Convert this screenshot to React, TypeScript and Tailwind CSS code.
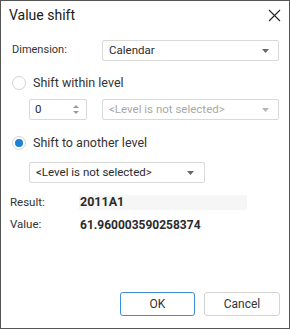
import React from "react";

const font = { fontFamily: "Roboto, 'Liberation Sans', sans-serif" };

const Caret = ({ color = "#666" }: { color?: string }) => (
  <svg width="7" height="4" viewBox="0 0 7 4">
    <path d="M0 0h7L3.5 4z" fill={color} />
  </svg>
);

const Combo = ({
  text,
  disabled,
  className,
}: {
  text: string;
  disabled?: boolean;
  className: string;
}) => (
  <div
    className={`flex items-center justify-between h-[21px] rounded-[2px] border border-[#d9d9d9] bg-white pl-[6px] pr-[9px] ${className}`}
  >
    <span className={disabled ? "text-[#a9a9a9]" : "text-[#2b2b2b]"}>{text}</span>
    <Caret color={disabled ? "#b5b5b5" : "#666"} />
  </div>
);

const Radio = ({ checked, label }: { checked?: boolean; label: string }) => (
  <div className="flex items-center gap-[7px] pl-[11px] h-[18px]">
    <div className="w-[14px] h-[14px] rounded-full border border-[#d4d4d4] flex items-center justify-center">
      {checked && <div className="w-[8px] h-[8px] rounded-full bg-[#1e80d2]" />}
    </div>
    <span className="text-[12.5px] text-[#333]">{label}</span>
  </div>
);

export default function App() {
  return (
    <div
      style={font}
      className="w-[290px] h-[329px] bg-white border border-[#555] flex flex-col text-[11.5px] text-[#333]"
    >
      <div className="flex items-center justify-between h-[28px] pl-[8px] pr-[8px]">
        <span className="text-[14px] text-[#1a1a1a]">Value shift</span>
        <svg width="13" height="13" viewBox="0 0 13 13">
          <path d="M1 1l11 11M12 1L1 12" stroke="#222" strokeWidth="1.1" />
        </svg>
      </div>

      <div className="flex items-center mt-[11px] h-[21px]">
        <span className="pl-[11px] w-[101px] text-[11px]">Dimension:</span>
        <Combo text="Calendar" className="w-[177px]" />
      </div>

      <div className="mt-[13px]">
        <Radio label="Shift within level" />
      </div>

      <div className="flex items-center mt-[7px] pl-[28px] gap-[15px]">
        <div className="flex items-center justify-between w-[58px] h-[21px] rounded-[2px] border border-[#d9d9d9] pl-[5px] pr-[7px]">
          <span className="text-[#2b2b2b]">0</span>
          <div className="flex flex-col gap-[3px]">
            <svg width="6" height="3" viewBox="0 0 6 3">
              <path d="M0 3h6L3 0z" fill="#9a9a9a" />
            </svg>
            <svg width="6" height="3" viewBox="0 0 6 3">
              <path d="M0 0h6L3 3z" fill="#9a9a9a" />
            </svg>
          </div>
        </div>
        <Combo text="<Level is not selected>" disabled className="w-[177px]" />
      </div>

      <div className="mt-[14px]">
        <Radio checked label="Shift to another level" />
      </div>

      <div className="mt-[10px] pl-[28px]">
        <Combo text="<Level is not selected>" className="w-[176px] pr-[10px]" />
      </div>

      <div className="flex items-center mt-[12px] h-[15px]">
        <span className="pl-[9px] w-[78px]">Result:</span>
        <div className="w-[168px] h-[15px] bg-[#f6f6f6] pl-[1px] flex items-center font-bold text-[12.5px] text-[#2b2b2b]">
          2011A1
        </div>
      </div>

      <div className="flex items-center mt-[7px] h-[15px]">
        <span className="pl-[9px] w-[78px]">Value:</span>
        <div className="pl-[1px] font-bold text-[12px] text-[#2b2b2b]">61.960003590258374</div>
      </div>

      <div className="flex-1" />

      <div className="flex justify-end gap-[9px] pr-[9px] mb-[12px]">
        <button className="w-[75px] h-[24px] rounded-[3px] border border-[#3d8fd1] bg-white text-[12px] text-[#333]">
          OK
        </button>
        <button className="w-[76px] h-[24px] rounded-[3px] border border-[#d4d4d4] bg-white text-[12px] text-[#333]">
          Cancel
        </button>
      </div>
    </div>
  );
}
